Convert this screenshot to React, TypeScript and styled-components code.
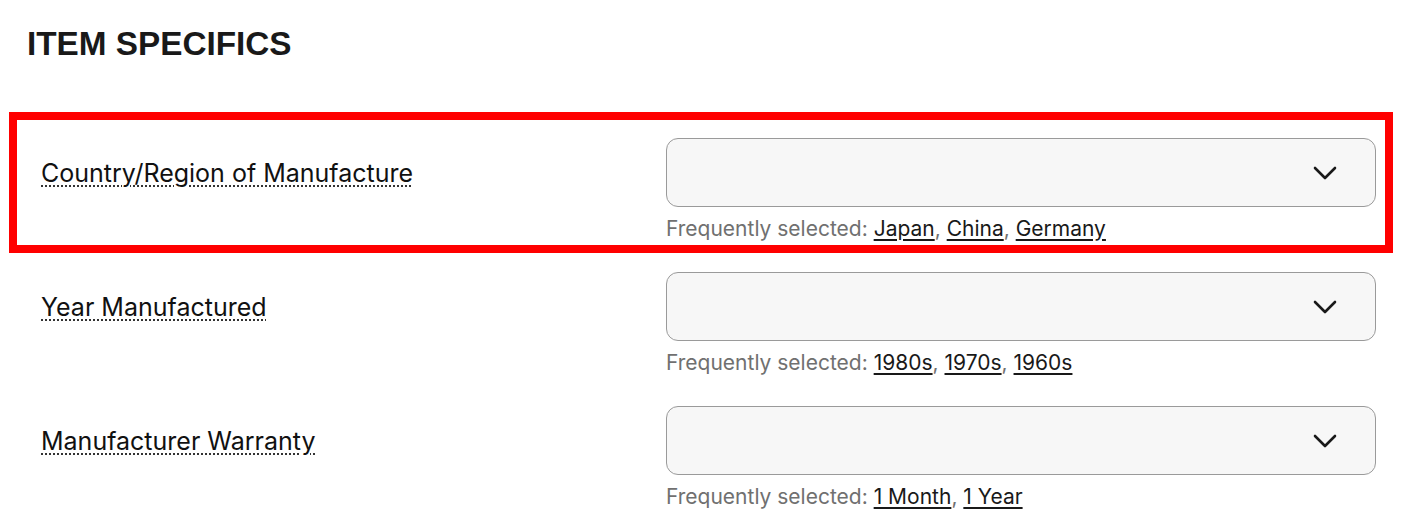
import React from "react";
import styled, { createGlobalStyle } from "styled-components";

interface Specific {
  label: string;
  suggestions: string[];
}

const specifics: Specific[] = [
  { label: "Country/Region of Manufacture", suggestions: ["Japan", "China", "Germany"] },
  { label: "Year Manufactured", suggestions: ["1980s", "1970s", "1960s"] },
  { label: "Manufacturer Warranty", suggestions: ["1 Month", "1 Year"] },
];

const ChevronDown = () => (
  <svg width="24" height="14" viewBox="0 0 24 14" fill="none">
    <path
      d="M2 2l10 10L22 2"
      stroke="#191919"
      strokeWidth="2.6"
      strokeLinecap="round"
      strokeLinejoin="round"
    />
  </svg>
);

export default function App() {
  return (
    <>
      <GlobalStyle />
      <Page>
        <Title>ITEM SPECIFICS</Title>
        <List>
          {specifics.map((item, index) => (
            <Row key={item.label} highlighted={index === 0}>
              <LabelCell>
                <Label>{item.label}</Label>
              </LabelCell>
              <Field>
                <Select type="button" aria-label={item.label}>
                  <ChevronDown />
                </Select>
                <Hint>
                  Frequently selected:{" "}
                  {item.suggestions.map((s, i) => (
                    <React.Fragment key={s}>
                      <Suggestion href="#">{s}</Suggestion>
                      {i < item.suggestions.length - 1 && ", "}
                    </React.Fragment>
                  ))}
                </Hint>
              </Field>
            </Row>
          ))}
        </List>
      </Page>
    </>
  );
}

const GlobalStyle = createGlobalStyle`
  body {
    margin: 0;
    background: #ffffff;
    font-family: Inter, "Liberation Sans", Arial, sans-serif;
    color: #191919;
  }
`;

const Page = styled.div`
  width: 1406px;
  padding-top: 24px;
`;

const Title = styled.h2`
  margin: 0 0 56px;
  padding-left: 27px;
  font-family: "Liberation Sans", Arial, sans-serif;
  font-size: 33.3px;
  line-height: 40px;
  font-weight: 700;
  color: #191919;
`;

const List = styled.div`
  display: flex;
  flex-direction: column;
  gap: 9px;
`;

const Row = styled.div<{ highlighted?: boolean }>`
  display: grid;
  grid-template-columns: 1fr 710px;
  box-sizing: border-box;
  width: 1368px;
  height: 125px;
  margin-left: 17px;
  padding: 18px 9px 0 24px;
  outline: ${(p) => (p.highlighted ? "8px solid #ff0000" : "none")};
`;

const LabelCell = styled.div`
  display: flex;
  align-items: center;
  height: 69px;
`;

const Label = styled.span`
  font-size: 25px;
  color: #111111;
  text-decoration: underline dotted #333333;
  text-decoration-thickness: 2px;
  text-underline-offset: 4px;
`;

const Field = styled.div`
  display: flex;
  flex-direction: column;
`;

const Select = styled.button`
  display: flex;
  align-items: center;
  justify-content: flex-end;
  box-sizing: border-box;
  width: 710px;
  height: 69px;
  padding: 0 38px 0 0;
  border: 1px solid #9a9a9a;
  border-radius: 12px;
  background: #f7f7f7;
  cursor: pointer;
`;

const Hint = styled.div`
  margin-top: 10px;
  font-size: 21px;
  line-height: 24px;
  color: #707070;
`;

const Suggestion = styled.a`
  color: #191919;
  text-decoration: underline;
  text-underline-offset: 3px;
`;
